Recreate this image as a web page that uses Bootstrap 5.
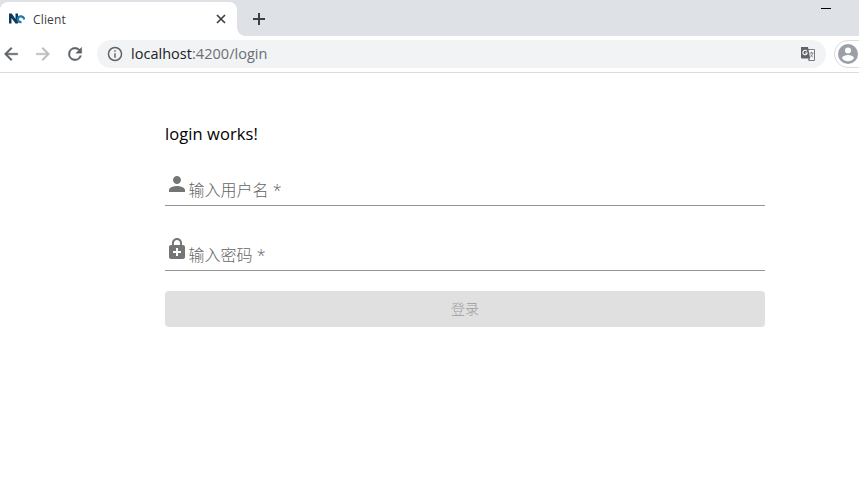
<!DOCTYPE html>
<html lang="zh-CN">
<head>
<meta charset="utf-8">
<meta name="viewport" content="width=device-width, initial-scale=1">
<title>Client</title>
<link rel="stylesheet" href="https://cdn.jsdelivr.net/npm/bootstrap@5.3.0/dist/css/bootstrap.min.css">
<style>
body { font-family: "Open Sans", "Noto Sans CJK SC", sans-serif; color: #000; height: 495px; }
svg { display: block; flex: none; }
.tab-strip { height: 36px; background: #dee1e6; padding-top: 2px; }
.browser-tab { width: 237px; height: 34px; background: #fff; border-radius: 8px 8px 0 0; padding: 0 10px 0 9px; }
.tab-curve { width: 8px; height: 8px; background: radial-gradient(circle at 100% 0, #dee1e6 7.5px, #fff 8px); }
.tab-title { font-size: 12px; color: #3c4043; margin-left: 8px; letter-spacing: .15px; padding-top: 1px; }
.new-tab { margin: 10px 0 0 7px; }
.minimize { width: 10px; height: 1px; background: #000; margin: 6px 28px 0 auto; }
.toolbar { height: 37px; border-bottom: 1px solid #dadce0; padding-left: 1px; }
.toolbar-icons { gap: 12px; }
.toolbar-icons path { stroke-width: .5; }
.address { width: 729px; height: 28px; border-radius: 14px; background: #f1f3f4; margin-left: 12px; padding: 0 10px 0 10px; }
.url { font-size: 14.5px; letter-spacing: .03px; color: #202124; margin-left: 8px; line-height: 20px; }
.url span { color: #6b6f74; }
.profile { width: 40px; height: 28px; border: 1px solid #dadce0; border-radius: 14px; margin-left: 8px; padding-left: 3px; flex: none; }
.login-page { width: 600px; margin-left: 165px; padding-top: 49px; }
.login-title { font-size: 16.5px; line-height: 24px; letter-spacing: .08px; }
.field { height: 34px; border-bottom: 1px solid #949494; color: #757575; }
.field-label { font-size: 16px; line-height: 24px; font-weight: 300; margin: 6px 0 0 -.5px; color: #646464; }
.field-user { margin-top: 26px; }
.field-pass { margin-top: 31px; }
.btn-login, .btn-login:disabled { margin-top: 20px; height: 36px; border: 0; border-radius: 4px; background: #e0e0e0; color: #9c9c9c; font-size: 14px; font-weight: 300; line-height: 36px; padding: 0; opacity: 1; }
</style>
</head>
<body class="bg-white overflow-hidden">
<header>
  <div class="tab-strip d-flex">
    <div class="browser-tab d-flex align-items-center">
      <svg width="16" height="16" viewBox="0 0 16 16"><path d="M0 12.500V2.500h2.800L6.500 8V2.500h2.500v10H6.500L2.500 7v5.500z" fill="#0d3a5c"/><path d="M15.500 8.500C14.500 5 10 4 9 7.500c-.5 2.500 1 3.800 3.500 3.600" fill="none" stroke="#237aa8" stroke-width="2.300"/></svg>
      <span class="tab-title">Client</span>
      <svg class="ms-auto" width="12" height="12" viewBox="0 0 12 12"><path d="M2 2l8 8M10 2l-8 8" stroke="#3c4043" stroke-width="1.700"/></svg>
    </div>
    <div class="tab-curve align-self-end"></div>
    <svg class="new-tab" width="14" height="14" viewBox="0 0 14 14"><path d="M7 1v12M1 7h12" stroke="#3c4043" stroke-width="2"/></svg>
    <div class="minimize"></div>
  </div>
  <div class="toolbar d-flex align-items-center">
    <div class="toolbar-icons d-flex align-items-center">
      <svg width="20" height="20" viewBox="0 0 24 24" fill="#5f6368" stroke="#5f6368"><path d="M20 11H7.830l5.590-5.590L12 4l-8 8 8 8 1.410-1.410L7.830 13H20v-2z"/></svg>
      <svg width="20" height="20" viewBox="0 0 24 24" fill="#babcbe" stroke="#babcbe"><path d="M12 4l-1.410 1.410L16.170 11H4v2h12.170l-5.580 5.590L12 20l8-8z"/></svg>
      <svg width="20" height="20" viewBox="0 0 24 24" fill="#5f6368" stroke="#5f6368"><path d="M17.650 6.350A7.958 7.958 0 0 0 12 4a8 8 0 1 0 7.730 10h-2.080A6 6 0 1 1 12 6c1.660 0 3.140.69 4.220 1.780L13 11h7V4l-2.350 2.350z"/></svg>
    </div>
    <div class="address d-flex align-items-center flex-shrink-0">
      <svg width="16" height="16" viewBox="1 1 22 22" fill="#5f6368"><path d="M11 17h2v-6h-2v6zm1-15a10 10 0 1 0 0 20 10 10 0 0 0 0-20zm0 18a8 8 0 1 1 0-16 8 8 0 0 1 0 16zM11 9h2V7h-2v2z"/></svg>
      <div class="url">localhost<span>:4200/login</span></div>
      <svg class="ms-auto" width="16" height="16" viewBox="0 0 16 16"><path d="M7 3.500h7.500v11H9" fill="#f8f9fa" stroke="#777a7d"/><path d="M1 1h7l2.200 11.500H2a1 1 0 0 1-1-1z" fill="#5f6368"/><path d="M8 12.500h2.200L8.500 15z" fill="#5f6368"/><path d="M6.900 5.300A2.200 2.200 0 1 0 7.200 7H5.200" fill="none" stroke="#fff" stroke-width="1.100"/><path d="M9.500 7h4M11.500 5.800V7M12.800 7c-.3 2-1.300 3.300-2.500 4M10.500 8.500l2.500 3" fill="none" stroke="#777a7d" stroke-width=".9"/></svg>
    </div>
    <div class="profile d-flex align-items-center">
      <svg width="20" height="20" viewBox="0 0 20 20"><circle cx="10" cy="10" r="10" fill="#9aa0a6"/><circle cx="10" cy="6.500" r="3" fill="#fff"/><path d="M4 14.200c0-2 4-3.100 6-3.100s6 1.100 6 3.100c-1.300 1.900-3.500 3-6 3s-4.700-1.100-6-3z" fill="#fff"/></svg>
    </div>
  </div>
</header>
<main class="login-page">
  <p class="login-title mb-0">login works!</p>
  <div class="field field-user d-flex">
    <svg width="24" height="24" viewBox="0 0 24 24" fill="#757575"><path d="M12 12c2.210 0 4-1.790 4-4s-1.790-4-4-4-4 1.790-4 4 1.790 4 4 4zm0 2c-2.670 0-8 1.340-8 4v2h16v-2c0-2.660-5.330-4-8-4z"/></svg>
    <label class="field-label">输入用户名 *</label>
  </div>
  <div class="field field-pass d-flex">
    <svg width="24" height="24" viewBox="0 0 24 24" fill="#757575"><path fill-rule="evenodd" d="M18 8h-1V6c0-2.760-2.240-5-5-5S7 3.240 7 6v2H6c-1.100 0-2 .9-2 2v10c0 1.100.9 2 2 2h12c1.100 0 2-.9 2-2V10c0-1.100-.9-2-2-2zM8.900 6c0-1.710 1.390-3.100 3.100-3.100s3.100 1.390 3.100 3.100v2H8.900V6zM16 16h-3v3h-2v-3H8v-2h3v-3h2v3h3v2z"/></svg>
    <label class="field-label">输入密码 *</label>
  </div>
  <button class="btn btn-login w-100 d-block" type="button" disabled>登录</button>
</main>
<script src="https://cdn.jsdelivr.net/npm/bootstrap@5.3.0/dist/js/bootstrap.bundle.min.js"></script>
</body>
</html>
